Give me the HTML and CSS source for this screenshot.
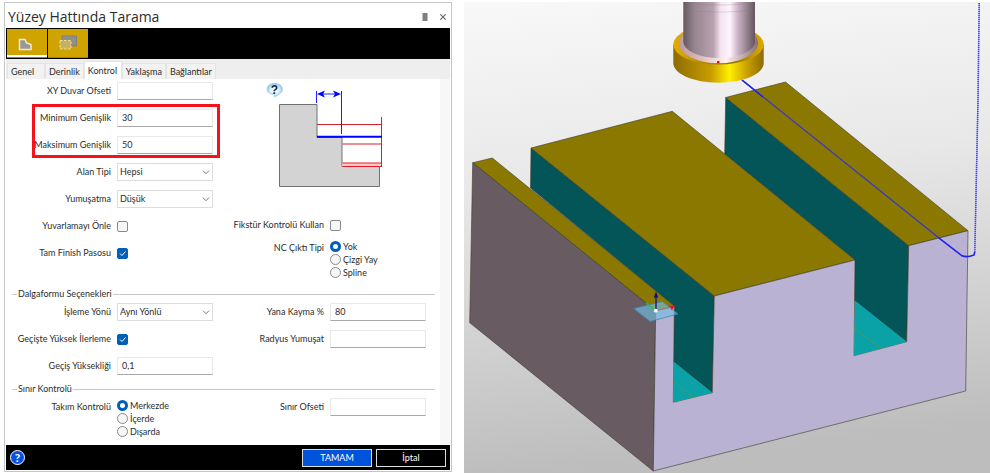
FILE: index.html
```html
<!DOCTYPE html>
<html lang="tr">
<head>
<meta charset="utf-8">
<title>Yüzey Hattında Tarama</title>
<link rel="stylesheet" href="styles.css">
</head>
<body>
<main class="workspace">
  <form class="dialog">
    <header class="titlebar">
      <h1>Yüzey Hattında Tarama</h1>
      <button type="button" class="icon-btn" aria-label="Menü"><svg width="6" height="8" viewBox="0 0 6 8"><path d="M.5 1h5M.5 3h5M.5 5h5M.5 7h5" stroke="#555" stroke-width="1.3"/></svg></button>
      <button type="button" class="icon-btn" aria-label="Kapat"><svg width="6" height="6" viewBox="0 0 6 6"><path d="M.3.3l5.4 5.4M5.7.3L.3 5.7" stroke="#666" stroke-width="1.1"/></svg></button>
    </header>
    <div class="toolbar">
      <button type="button" class="tool tool-on" aria-label="Parça"><svg width="40" height="30" viewBox="0 0 40 30"><path d="M12.500 10.500h5.500l1.500 3.500 4.500 1.500v5H12.500z" fill="#999" stroke="#f2ead0" stroke-width="1.500"/></svg></button>
      <button type="button" class="tool" aria-label="Sınır"><svg width="40" height="30" viewBox="0 0 40 30"><path d="M14 7h14.500v10H14z" fill="#8f8f8f" stroke="#808080"/><path d="M12 11.500h11v8.500H12z" fill="#d0b860" fill-opacity=".8" stroke="#f3dc86" stroke-dasharray="2.500 1.500"/></svg></button>
    </div>
    <nav class="tabs">
      <button type="button" class="tab">Genel</button>
      <button type="button" class="tab">Derinlik</button>
      <button type="button" class="tab tab-on">Kontrol</button>
      <button type="button" class="tab">Yaklaşma</button>
      <button type="button" class="tab">Bağlantılar</button>
    </nav>
    <div class="content">
      <div class="cols">
        <div class="col col-start">
          <div class="row"><label for="xy">XY Duvar Ofseti</label><input id="xy" type="text"></div>
          <div class="marked">
            <div class="row"><label for="minw">Minimum Genişlik</label><input id="minw" type="text" value="30"></div>
            <div class="row"><label for="maxw">Maksimum Genişlik</label><input id="maxw" type="text" value="50"></div>
          </div>
          <div class="row"><label for="area">Alan Tipi</label><select id="area"><option>Hepsi</option></select></div>
          <div class="row"><label for="smooth">Yumuşatma</label><select id="smooth"><option>Düşük</option></select></div>
          <div class="row"><label for="noroll">Yuvarlamayı Önle</label><input id="noroll" type="checkbox"></div>
          <div class="row"><label for="finish">Tam Finish Pasosu</label><input id="finish" type="checkbox" checked></div>
        </div>
        <div class="col col-end">
          <svg class="sketch" width="120" height="110" viewBox="265 82 120 110">
            <defs><radialGradient id="bub"><stop offset="0" stop-color="#fff"/><stop offset=".6" stop-color="#d8effa"/><stop offset="1" stop-color="#8cc4de"/></radialGradient></defs>
            <path d="M274.500 83.300c4.500 0 8 2.700 8 6 0 3-3.500 6-8.500 7.700l1-2c-4-.3-8-2.500-8-5.700 0-3.300 3-6 7.500-6z" fill="url(#bub)" stroke="#9ccbe0" stroke-width=".6"/>
            <text x="274.500" y="94" class="bubble-mark">?</text>
            <path d="M279.500 104.500h37.500v33h25v29h37.500v20h-100z" fill="#d3d3d3" stroke="#707070"/>
            <path d="M342.500 163h38v3.500h-38z" fill="#ffc9c9"/>
            <path d="M317 124.500h64M342.500 144h39M342.500 163h39M342.500 166.500h39M381.500 117v50" stroke="#e11d2b" fill="none"/>
            <path d="M317 136.800h65" stroke="#00f" stroke-width="2"/>
            <path d="M316.500 91v12M341.500 91v43M320 94h18" stroke="#2020ff" fill="none"/>
            <path d="M317 94l8-3.500-2 3.500 2 3.500zM341 94l-8-3.500 2 3.500-2 3.500z" fill="#00f"/>
          </svg>
          <div class="row"><label for="fix">Fikstür Kontrolü Kullan</label><input id="fix" type="checkbox"></div>
          <div class="row row-top" role="radiogroup" aria-labelledby="nc"><span id="nc">NC Çıktı Tipi</span>
            <div class="radios">
              <label><input type="radio" name="nc" checked>Yok</label>
              <label><input type="radio" name="nc">Çizgi Yay</label>
              <label><input type="radio" name="nc">Spline</label>
            </div>
          </div>
        </div>
      </div>
      <fieldset>
        <legend>Dalgaformu Seçenekleri</legend>
        <div class="cols">
          <div class="col">
            <div class="row"><label for="dir">İşleme Yönü</label><select id="dir"><option>Aynı Yönlü</option></select></div>
            <div class="row"><label for="fast">Geçişte Yüksek İlerleme</label><input id="fast" type="checkbox" checked></div>
            <div class="row"><label for="height">Geçiş Yüksekliği</label><input id="height" type="text" value="0,1"></div>
          </div>
          <div class="col">
            <div class="row"><label for="step">Yana Kayma %</label><input id="step" type="text" value="80"></div>
            <div class="row"><label for="radius">Radyus Yumuşat</label><input id="radius" type="text"></div>
          </div>
        </div>
      </fieldset>
      <fieldset>
        <legend>Sınır Kontrolü</legend>
        <div class="cols">
          <div class="col">
            <div class="row row-top" role="radiogroup" aria-labelledby="tc"><span id="tc">Takım Kontrolü</span>
              <div class="radios">
                <label><input type="radio" name="tc" checked>Merkezde</label>
                <label><input type="radio" name="tc">İçerde</label>
                <label><input type="radio" name="tc">Dışarda</label>
              </div>
            </div>
          </div>
          <div class="col">
            <div class="row"><label for="bound">Sınır Ofseti</label><input id="bound" type="text"></div>
          </div>
        </div>
      </fieldset>
    </div>
    <footer class="footer">
      <button type="button" class="help" aria-label="Yardım">?</button>
      <button type="button" class="action action-ok">TAMAM</button>
      <button type="button" class="action">İptal</button>
    </footer>
  </form>
  <svg class="view" viewBox="464 2 526 471" preserveAspectRatio="xMinYMin slice" role="img" aria-label="3B model">
    <defs>
      <linearGradient id="bg" x2=".12" y2="1"><stop offset="0" stop-color="#f8f8f8"/><stop offset=".4" stop-color="#e8e8e8"/><stop offset="1" stop-color="#bdbdbd"/></linearGradient>
      <linearGradient id="shank"><stop offset="0" stop-color="#66585f"/><stop offset=".15" stop-color="#95848e"/><stop offset=".42" stop-color="#b9a2af"/><stop offset=".52" stop-color="#f4e4f0"/><stop offset=".65" stop-color="#fff4fd"/><stop offset=".76" stop-color="#cbb4c6"/><stop offset="1" stop-color="#65545f"/></linearGradient>
      <linearGradient id="ring"><stop offset="0" stop-color="#8d6c00"/><stop offset=".2" stop-color="#a98300"/><stop offset=".42" stop-color="#c99d00"/><stop offset=".62" stop-color="#fff000"/><stop offset=".8" stop-color="#cfa500"/><stop offset="1" stop-color="#8d6a00"/></linearGradient>
      <linearGradient id="rim"><stop offset="0" stop-color="#e3ae08"/><stop offset=".3" stop-color="#b98d00"/><stop offset=".65" stop-color="#94720a"/><stop offset="1" stop-color="#e0aa00"/></linearGradient>
      <linearGradient id="flange"><stop offset="0" stop-color="#b99aa0"/><stop offset=".3" stop-color="#e0bfc0"/><stop offset=".6" stop-color="#fff0ee"/><stop offset="1" stop-color="#86706f"/></linearGradient>
    </defs>
    <path d="M464 2h526v471H464z" fill="url(#bg)"/>
    <g stroke="#3d3a2c" stroke-width=".6" stroke-linejoin="round">
      <path d="M725.700 97.500L908.700 245.700 906.700 341.700 854 301 855 260 724.700 154z" fill="#045557"/>
      <path d="M725.700 97.500L785.500 82 968 230.700 908.700 245.700z" fill="#8a7800"/>
      <path d="M531 148L714.300 296 712.300 392.700 673.300 361.500 674.300 306 530.500 188z" fill="#045557"/>
      <path d="M531 148L672.300 111.300 855 260 714.300 296z" fill="#8a7800"/>
      <path d="M472.700 162.700L492.300 158 674.300 306 655.700 311z" fill="#8a7800"/>
      <path d="M472.700 162.700L655.700 311 653.300 471 469.700 322.700z" fill="#685c62"/>
      <path d="M655.700 311L674.300 306 673.300 402.300 712.300 392.700 714.300 296 855 260 854 355.700 906.700 341.700 908.700 245.700 968 230.700 965.700 391 653.300 471z" fill="#bab2d2"/>
    </g>
    <path d="M674 362l38.300 30.700-39 9.600zM855 300.500l51.700 41.200-52.700 14z" fill="#0aa2a6"/>
    <path d="M674 382l19 15M854 328l27 20.500" stroke="#5f9650" stroke-width=".8"/>
    <path d="M633.500 308.500l29-7 15.500 12.500-28 7.500z" fill="#72bfe2" fill-opacity=".65" stroke="#377fa8" stroke-width=".7"/>
    <path d="M646 303l10 8" stroke="#25c44a" stroke-width="1.300"/>
    <path d="M656 310.500l14-3" stroke="#b86a70" stroke-width="1.200"/>
    <path d="M669.500 305.500l5.500 1-3.500 3.500z" fill="#e81818"/>
    <path d="M656 310v-14" stroke="#121296" stroke-width="1.300"/><path d="M656 291.500l2.200 6h-4.400z" fill="#0d0d80"/>
    <circle cx="655.800" cy="310.700" r="1.900" fill="#fff"/>
    <path d="M979.200 3L978 100 974.800 252" fill="none" stroke="#9c9cf8" stroke-width="1.500"/>
    <path d="M979.200 3L978 100 974.800 252" fill="none" stroke="#4444f4" stroke-width="1.500" stroke-dasharray="1 1"/>
    <path d="M742 80L939 238" stroke="#3838c8" stroke-width="1.300"/>
    <path d="M742 80l21 17M938.500 237.600l23.500 18.200q5 2 12-.8l.8-3" fill="none" stroke="#2020f0" stroke-width="1.600"/>
    <path d="M673.300 44.500v18.500c0 10.900 20.200 19.700 45.200 19.700s45.200-8.800 45.200-19.700V44.500z" fill="url(#ring)"/>
    <ellipse cx="718.500" cy="44.500" rx="45.200" ry="20" fill="url(#rim)"/>
    <ellipse cx="718.500" cy="43" rx="39.500" ry="20.200" fill="url(#flange)"/>
    <path d="M683.300 2h71.700v39.500c0 9-16 16.500-35.800 16.500s-35.900-7.500-35.900-16.500z" fill="url(#shank)"/>
    <path d="M686 2c8 4 56 4 66 0M684 9c14 4 56 4 70 0" fill="none" stroke="#85747f" stroke-opacity=".25"/>
    <path d="M717 61h2.500v2.500H717z" fill="#e81818"/>
  </svg>
</main>
</body>
</html>
```
FILE: styles.css
```css
* { box-sizing: border-box; }

body {
  margin: 0;
  background: #fff;
  color: #2c2c2c;
  font: 9px/18px Lato, "Open Sans", sans-serif;
}

button, input, select { font: inherit; color: inherit; margin: 0; }
button { border: 0; padding: 0; background: none; }

.workspace {
  display: grid;
  grid-template-columns: 448fr 526fr;
  column-gap: 12px;
  min-height: 100vh;
  padding: 2px 0 0 4px;
}

.dialog {
  display: flex;
  flex-direction: column;
  margin-bottom: 1px;
  border: 1px solid #c4c4c4;
  padding: 0 1px 1px;
  min-width: 0;
}

.titlebar {
  display: flex;
  align-items: center;
  height: 25px;
  padding: 2px 4px 0 2px;
  gap: 12px;
}
.titlebar h1 {
  flex: 1;
  margin: 0;
  font-family: "Open Sans", sans-serif;
  font-size: 14px;
  font-weight: 400;
}
.icon-btn { display: flex; }

.toolbar { display: flex; height: 31px; background: #000; padding: 1px; gap: 1px; }
.tool { display: flex; background: #d0a400; border-bottom: 1px solid #a88500; }
.tool-on { box-shadow: inset 0 -2px #fff; }

.tabs {
  display: flex;
  align-items: flex-end;
  height: 20px;
  background: #eee;
  padding-left: 1px;
}
.tab {
  min-width: 38px;
  height: 16px;
  line-height: 16px;
  padding: 0 3px;
  text-align: left;
  background: #f2f2f2;
  border: 1px solid #e4e4e4;
  border-bottom: 0;
}
.tab-on { height: 18px; background: #fff; }

.content {
  flex: 1;
  padding: 3px 5px 0 6px;
  border-right: 10px solid #f7f7f7;
}

.cols { display: grid; grid-template-columns: 201fr 213fr; padding-right: 9px; }
.col, .marked { display: flex; flex-direction: column; gap: 9px; min-width: 0; }
.col-start { padding-bottom: 18px; }
.col-end { gap: 5px; justify-content: flex-end; padding-bottom: 1px; }

.row {
  display: grid;
  grid-template-columns: 1fr 96px;
  column-gap: 6px;
  align-items: center;
  min-height: 18px;
  text-align: right;
  white-space: nowrap;
}
.row-top { align-items: start; }

.marked { position: relative; }
.marked::after {
  content: "";
  position: absolute;
  inset: -5px -7px -4px 20px;
  border: 3px solid #f5131b;
  pointer-events: none;
}
.marked label { position: relative; z-index: 1; }

input[type="text"], select {
  width: 100%;
  height: 18px;
  border: 1px solid #e8e8e8;
  background: #fff;
  padding: 0 4px;
}
input[type="text"] { border-bottom: 1px solid #a8a8a8; }
select {
  appearance: none;
  padding: 0 2px;
  border-color: #ddd;
  line-height: 16px;
  background: #fff url("data:image/svg+xml,%3Csvg xmlns='http://www.w3.org/2000/svg' width='8' height='5'%3E%3Cpath d='M1 .7l3 3 3-3' fill='none' stroke='%23777'/%3E%3C/svg%3E") no-repeat right 2px center;
}

input[type="checkbox"], input[type="radio"] {
  appearance: none;
  width: 11px;
  height: 11px;
  border: 1px solid #8a8a8a;
  background: #f6f6f6;
}
input[type="checkbox"] { border-radius: 2px; }
input[type="radio"] { border-radius: 50%; }
input[type="checkbox"]:checked {
  border-color: #005fb8;
  background: #005fb8 url("data:image/svg+xml,%3Csvg xmlns='http://www.w3.org/2000/svg' width='9' height='9'%3E%3Cpath d='M2 4.500l2 2 3.500-4' fill='none' stroke='%23fff'/%3E%3C/svg%3E") center no-repeat;
}
input[type="radio"]:checked { border: 3px solid #005fb8; background: #fff; }

.radios { display: flex; flex-direction: column; padding-top: 1px; }
.radios label { display: flex; align-items: center; gap: 2px; line-height: 13px; }

.sketch { display: block; flex: none; margin: 0 0 auto 52px; overflow: visible; }
.bubble-mark { font: 700 12px "Liberation Sans", sans-serif; text-anchor: middle; fill: #14204a; }

fieldset {
  min-width: 0;
  margin: 5px 0 0;
  border: 0;
  border-top: 1px solid #c8c8c8;
  padding: 0;
}
legend { margin-left: 5px; padding: 0 1px; }

.footer {
  display: flex;
  align-items: center;
  gap: 4px;
  height: 25px;
  padding: 0 4px;
  background: #000;
  color: #fff;
}
.help {
  width: 15px;
  height: 15px;
  margin-right: auto;
  border: 1px solid #fff;
  border-radius: 50%;
  background: #0a4fe0;
  font-weight: 700;
  font-size: 12px;
  line-height: 12px;
}
.action { width: 70px; height: 18px; line-height: 16px; border: 1px solid #ddd; }
.action-ok { background: #0054dc; }

.view { display: block; width: 100%; height: 100%; min-width: 0; }
```
